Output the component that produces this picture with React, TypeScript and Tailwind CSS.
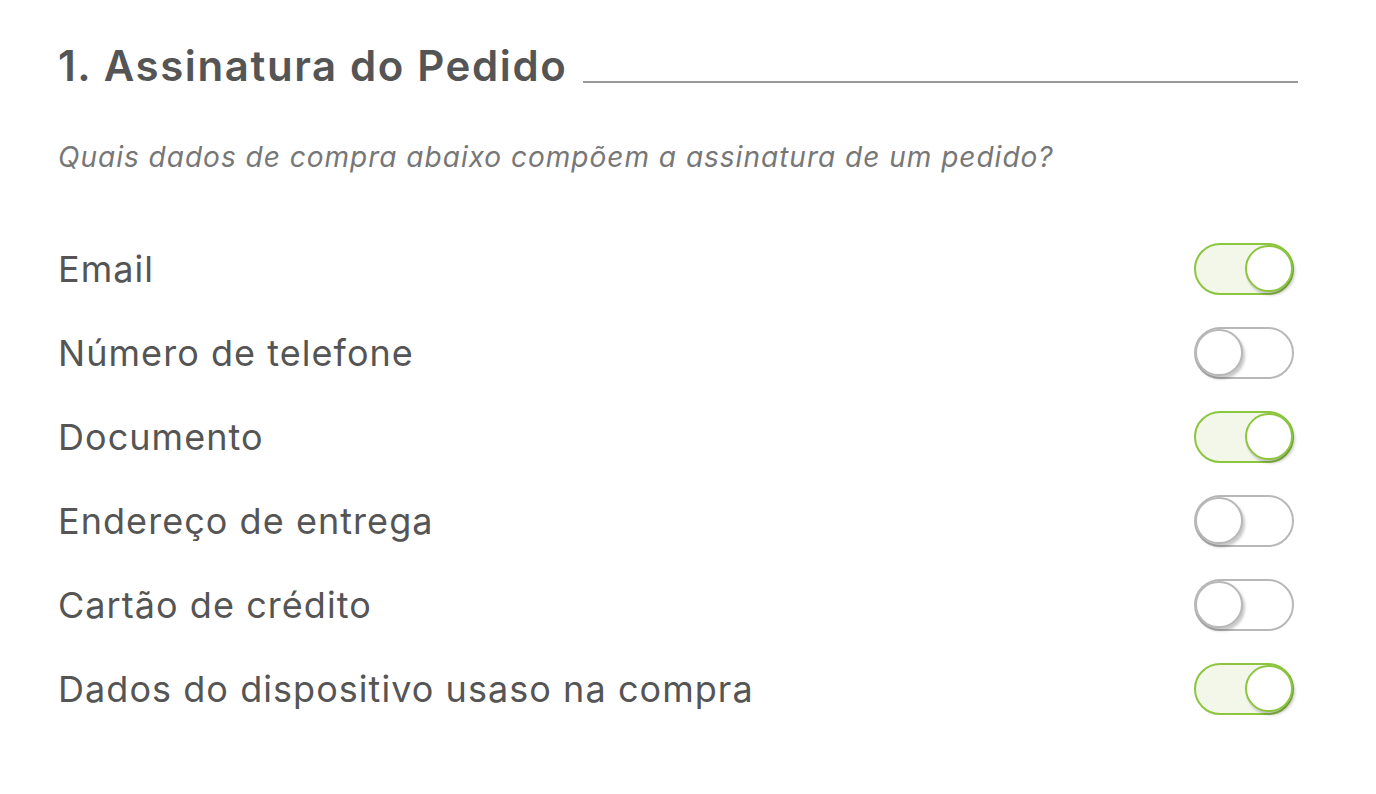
import React, { useState } from "react";

const items: { label: string; on: boolean }[] = [
  { label: "Email", on: true },
  { label: "Número de telefone", on: false },
  { label: "Documento", on: true },
  { label: "Endereço de entrega", on: false },
  { label: "Cartão de crédito", on: false },
  { label: "Dados do dispositivo usaso na compra", on: true },
];

function Toggle({ on, onClick }: { on: boolean; onClick: () => void }) {
  return (
    <button
      onClick={onClick}
      className={
        on
          ? "relative w-[100px] h-[52px] rounded-full border-2 border-[#8cc63f] bg-[#f2f7ea] shrink-0"
          : "relative w-[100px] h-[52px] rounded-full border-2 border-[#b8b8b8] bg-white shrink-0"
      }
    >
      <span
        className={
          on
            ? "absolute top-[0px] right-[-1px] w-[48px] h-[47px] rounded-full border-2 border-[#8cc63f] bg-white shadow-[2px_3px_3px_rgba(0,0,0,0.22)]"
            : "absolute top-[0px] left-[-1px] w-[48px] h-[47px] rounded-full border-2 border-[#b8b8b8] bg-white shadow-[2px_3px_3px_rgba(0,0,0,0.22)]"
        }
      />
    </button>
  );
}

export default function App() {
  const [state, setState] = useState(items.map((i) => i.on));
  return (
    <div className="min-h-[794px] bg-white" style={{ fontFamily: "Inter, 'Noto Sans', sans-serif" }}>
      <div className="pl-[58px] pt-[40px] w-[1298px]">
        <div className="flex items-end">
          <h1 className="text-[42px] leading-[52px] font-semibold text-[#555555] tracking-[1.6px] whitespace-nowrap">
            1. Assinatura do Pedido
          </h1>
          <div className="flex-1 ml-[16px] mb-[9px] h-[2px] bg-[#9a9a9a]" />
        </div>
        <p className="mt-[49px] italic text-[28px] leading-[32px] text-[#777777] tracking-[1px] whitespace-nowrap">
          Quais dados de compra abaixo compõem a assinatura de um pedido?
        </p>
        <div className="mt-[54px] flex flex-col">
          {items.map((it, i) => (
            <div key={it.label} className="flex items-center justify-between h-[84px] pr-[4px]">
              <span className="text-[36px] text-[#555555] tracking-[1.05px] whitespace-nowrap">{it.label}</span>
              <Toggle
                on={state[i]}
                onClick={() => setState((s) => s.map((v, j) => (j === i ? !v : v)))}
              />
            </div>
          ))}
        </div>
      </div>
    </div>
  );
}
